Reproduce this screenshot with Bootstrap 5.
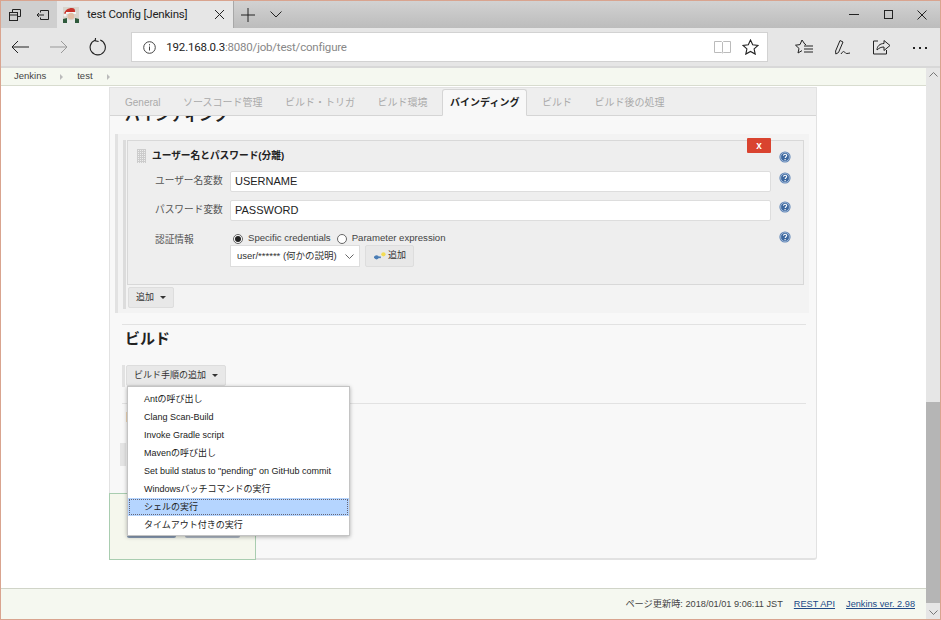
<!DOCTYPE html>
<html lang="ja">
<head>
    <meta charset="UTF-8">
    <title>test Config [Jenkins]</title>
    <link href="https://cdn.jsdelivr.net/npm/bootstrap@5.3.0/dist/css/bootstrap.min.css" rel="stylesheet">
    <style>
        html, body { height: 100%; overflow: hidden; }
        body { font-family: "Liberation Sans", "Noto Sans CJK JP", sans-serif; font-size: 11px; color: #333; background: #fff; }
        svg { display: block; flex: none; }

        /* browser frame */
        .win { height: 620px; display: flex; flex-direction: column; border: 1px solid #d9a48f; }
        .tabstrip { height: 27px; display: flex; align-items: center; background: linear-gradient(#d2d2d2, #bcbcbc); }
        .strip-btn { width: 28px; height: 27px; display: flex; align-items: center; justify-content: center; background: #cfcfcf; }
        .page-tab { width: 177px; height: 27px; display: flex; align-items: center; background: #e6e6e6; border-right: 1px solid #a8a8a8; padding-left: 6px; font-family: Roboto, sans-serif; font-size: 11.5px; letter-spacing: -.2px; color: #222; }
        .page-tab span { margin-left: 8px; flex-grow: 1; }
        .strip-ctl { display: flex; margin-left: auto; margin-right: 1px; }
        .strip-ctl div { width: 34px; height: 27px; display: flex; align-items: center; justify-content: center; }
        .toolbar { height: 38px; display: flex; align-items: center; background: #e6e6e6; border-bottom: 2px solid #d8d8d8; box-sizing: content-box; }
        .tool-btn { width: 39px; height: 38px; display: flex; align-items: center; justify-content: center; }
        .addr { width: 640px; height: 30px; margin-left: 14px; margin-right: 8px; display: flex; align-items: center; background: #fff; border: 1px solid #d2d2d2; padding: 0 8px 0 11px; font-family: Roboto, sans-serif; font-size: 11.5px; letter-spacing: -.2px; color: #888; }
        .addr b { font-weight: 400; color: #222; }
        .addr-text { margin-left: 10px; padding-top: 2px; flex-grow: 1; }
        .addr-star { margin-left: 11px; }
        .tool-first { margin-left: 9px; }

        .pagearea { flex-grow: 1; min-height: 0; display: flex; }
        .pagecol { width: 925px; display: flex; flex-direction: column; }
        .vscroll { width: 14px; background: #e6e6e6; display: flex; flex-direction: column; align-items: center; justify-content: space-between; position: relative; }
        .vscroll-thumb { position: absolute; left: 0; right: 0; top: 334px; height: 201px; background: #b5b5b5; }
        .vscroll svg { margin: 4px 0; position: relative; }

        /* jenkins */
        .crumbs { height: 18px; flex: none; background: #f5f8f0; border-bottom: 1px solid #d8dccf; display: flex; align-items: center; padding-left: 13px; font-size: 9.5px; color: #444; }
        .crumb-sep { width: 0; height: 0; margin: 0 14px; border-left: 3px solid #bbb; border-top: 3px solid transparent; border-bottom: 3px solid transparent; }
        .jmain { flex-grow: 1; min-height: 0; padding: 1px 0 0 108px; }
        .panel-box { width: 708px; height: 473px; position: relative; display: flex; flex-direction: column; background: #f8f8f8; border: 1px solid #e2e2e2; border-bottom-width: 2px; border-radius: 0 0 3px 3px; }

        .jtabs { height: 28px; flex: none; background: #eee; border-bottom: 1px solid #d5d5d5; padding: 1px 0 0 7px; flex-wrap: nowrap; font-size: 10px; white-space: nowrap; }
        .jtabs .nav-link { height: 27px; padding: 0 7px; margin-right: 6.5px; display: flex; align-items: center; color: #aaa; background: none; border: 1px solid transparent; border-radius: 3px 3px 0 0; }
        .jtabs .nav-link.active { color: #222; font-weight: 700; background: #f8f8f8; border-color: #d5d5d5 #d5d5d5 #f8f8f8; }
        .clip-head { height: 18px; overflow: hidden; padding-left: 15px; }
        .clip-head h2 { margin: -11px 0 0; font-size: 15px; line-height: 20px; font-weight: 700; color: #222; }

        .outer-block { width: 694px; height: 179px; margin-left: 5px; padding: 6px 5px 0 5px; background: #f3f3f3; border-left: 3px solid #e2e2e2; }
        .inner-wrap { height: 169px; border-left: 3px solid #dcdcdc; padding-left: 1px; }
        .inner-box { height: 145px; position: relative; background: #eee; border: 1px solid #d8d8d8; padding: 0 0 0 8px; }
        .dup-head { height: 30px; display: flex; align-items: center; padding-left: 1px; font-size: 9.7px; font-weight: 700; color: #222; }
        .dup-help { margin-left: auto; margin-right: 12px; margin-top: 2px; }
        .grip { width: 9px; height: 14px; margin-right: 6px; background-image: repeating-linear-gradient(#ccc 0 1px, transparent 1px 2px), repeating-linear-gradient(90deg, #ccc 0 1px, transparent 1px 2px); }
        .del-btn { position: absolute; right: 32px; top: -3px; width: 24px; height: 15px; padding: 0; border: 0; border-radius: 1px; background: #d9432f; color: #fff; font-size: 10px; font-weight: 700; line-height: 15px; }
        .frow { display: flex; align-items: flex-start; }
        .frow label { width: 94px; height: 21px; padding-left: 19px; display: flex; align-items: center; font-size: 9.7px; color: #555; flex: none; white-space: nowrap; }
        .frow label.cred-label { height: auto; padding-top: 2px; }
        .jinput.form-control { width: 541px; height: 21px; min-height: 0; padding: 0 4px 1px; font-size: 11px; color: #222; border: 1px solid #ddd; border-radius: 2px; background: #fff; }
        .help-ic { margin-left: 8px; margin-top: 1px; }
        .cred-col { width: 541px; display: flex; flex-direction: column; }
        .cred-row { margin-top: 10px; }
        .cred-row .help-ic { margin-top: 0; }
        .cred-radios { display: flex; align-items: center; height: 14px; font-size: 9.6px; color: #444; white-space: nowrap; }
        .jradio { width: 10px; height: 10px; margin: 2px 5px 0 3px; border: 1px solid #666; border-radius: 50%; background: #fff; display: flex; align-items: center; justify-content: center; }
        .jradio i { width: 6px; height: 6px; border-radius: 50%; background: #222; }
        .jradio.second { margin-left: 6px; }
        .jselect.form-select { width: 130px; height: 22px; min-height: 0; padding: 0 0 0 6px; font-size: 9.5px; color: #333; border: 1px solid #ddd; border-radius: 0; background-image: url("data:image/svg+xml,%3csvg xmlns='http://www.w3.org/2000/svg' viewBox='0 0 9 5'%3e%3cpath fill='none' stroke='%23666' d='M.5 .5l4 4 4-4'/%3e%3c/svg%3e"); background-size: 9px 5px; background-position: right 5px center; }
        .jbtn.btn { height: 21px; padding: 0 7px; display: inline-flex; align-items: center; font-size: 9px; color: #333; background: #e8e8e8; border: 1px solid #ddd; border-radius: 2px; white-space: nowrap; }
        .jbtn .caret { margin-left: 6px; width: 0; height: 0; border-left: 3px solid transparent; border-right: 3px solid transparent; border-top: 3px solid #333; }
        .addkey.btn { width: 49px; height: 22px; margin-left: 5px; padding: 0 0 0 8px; }
        .key-ic { margin-right: 2px; }
        .add-row { padding: 2px 0 0 1px; }

        .jrule { margin: 0; border: 0; border-top: 1px solid #e2e2e2; opacity: 1; }
        .jrule1 { margin: 11px 10px 0 12px; }
        .jrule2 { margin: 16px 10px 0 12px; }
        .sec-title { margin: 4px 0 0 15px; font-size: 15px; line-height: 20px; font-weight: 700; color: #222; }
        .step-row { margin: 16px 0 0 12px; padding-left: 1px; border-left: 3px solid #e2e2e2; height: 22px; position: relative; width: fit-content; }
        .step-menu.dropdown-menu { top: 21px; left: 2px; width: 223px; margin: 0; padding: 3px 0 1px; min-width: 0; font-size: 9px; border: 1px solid #c4c4c4; border-radius: 0; box-shadow: 0 1px 4px rgba(0,0,0,.3); }
        .step-menu .dropdown-item { height: 18px; padding: 0 0 0 16px; line-height: 18px; color: #222; white-space: nowrap; }
        .step-menu .dropdown-item.active { background: #b5d5ff; color: #222; outline: 1px dotted #667; outline-offset: -2px; }
        .mark-or { width: 1px; height: 10px; margin: 8px 0 0 16px; background: #f0d8b8; }
        .gray-bar { width: 6px; height: 23px; margin: 21px 0 0 10px; background: #e4e4e4; }
        .savebar { margin-top: auto; margin-left: -1px; margin-bottom: -2px; width: 147px; height: 67px; display: flex; gap: 9px; padding: 23px 0 0 17px; background: #f5f7ed; border: 1px solid #a9cdb0; }
        .save-btn, .apply-btn { height: 21px; border-radius: 2px; }
        .save-btn { width: 49px; background: #8a9db5; }
        .apply-btn { width: 55px; background: #b0bac6; }

        .jfoot { height: 31px; flex: none; background: #f5f8f0; border-top: 1px solid #d0d4c8; display: flex; align-items: center; justify-content: flex-end; gap: 11px; padding: 1px 11px 0 0; font-size: 9.2px; color: #444; }
        .jfoot a { color: #204a87; }
    </style>
</head>
<body>
    <svg width="0" height="0" class="position-absolute">
        <symbol id="help" viewBox="0 0 12 12">
            <circle cx="6" cy="6" r="5.600" fill="#5d83b5"/>
            <circle cx="6" cy="6" r="4.400" fill="#3d689f" stroke="#b8cbe2" stroke-width=".7"/>
            <path d="M4.400 4.700c.2-1 .9-1.400 1.700-1.400 1 0 1.600.6 1.600 1.300 0 1.200-1.500 1.200-1.500 2.500" fill="none" stroke="#fff" stroke-width="1.100"/>
            <rect x="5.500" y="8" width="1.200" height="1.200" fill="#fff"/>
        </symbol>
    </svg>

    <div class="win">
        <div class="tabstrip">
            <div class="strip-btn">
                <svg width="14" height="14" viewBox="0 0 14 14" fill="none" stroke="#222"><path d="M4.500 4.500v-3h8v7h-3"/><rect x="1.500" y="4.500" width="8" height="8"/><path d="M1.500 7h8"/></svg>
            </div>
            <div class="strip-btn">
                <svg width="14" height="12" viewBox="0 0 14 12" fill="none" stroke="#222"><path d="M4.500 3.500v-2h8v9h-8v-2"/><path d="M8 6H1m2-2L1 6l2 2"/></svg>
            </div>
            <div class="page-tab">
                <svg width="16" height="16" viewBox="0 0 16 16">
                    <rect width="16" height="16" fill="#d8d4cc"/>
                    <path d="M1 7C2 3 5 1 9 1c2 0 3 1 3 3v2z" fill="#c8332b"/>
                    <rect x="3" y="5" width="10" height="2" fill="#f4f4f4"/>
                    <circle cx="2" cy="8" r="1.600" fill="#f4f4f4"/>
                    <circle cx="8" cy="9" r="3.200" fill="#e2bfa6"/>
                    <path d="M4 11c2 3 6 3 8 0v5H4z" fill="#e8e8e8"/>
                    <path d="M0 12l4-1v5H0zM12 11l4 1v4h-4z" fill="#2f5a3c"/>
                </svg>
                <span>test Config [Jenkins]</span>
                <svg class="me-2" width="11" height="11" viewBox="0 0 11 11" stroke="#222"><path d="M1 1l9 9M10 1l-9 9"/></svg>
            </div>
            <div class="strip-btn bg-transparent">
                <svg width="14" height="14" viewBox="0 0 14 14" stroke="#222"><path d="M7 0v14M0 7h14"/></svg>
            </div>
            <div class="strip-btn bg-transparent">
                <svg width="12" height="7" viewBox="0 0 12 7" fill="none" stroke="#222"><path d="M.5 .5L6 6l5.500-5.500"/></svg>
            </div>
            <div class="strip-ctl">
                <div><svg width="10" height="1" viewBox="0 0 10 1" stroke="#222"><path d="M0 .5h10"/></svg></div>
                <div><svg width="9" height="9" viewBox="0 0 9 9" fill="none" stroke="#222"><rect x=".5" y=".5" width="8" height="8"/></svg></div>
                <div><svg width="10" height="10" viewBox="0 0 10 10" stroke="#222"><path d="M.5 .5l9 9M9.500 .5l-9 9"/></svg></div>
            </div>
        </div>

        <div class="toolbar">
            <div class="tool-btn">
                <svg width="18" height="14" viewBox="0 0 18 14" fill="none" stroke="#222"><path d="M18 7H1M7 1L1 7l6 6"/></svg>
            </div>
            <div class="tool-btn">
                <svg width="18" height="14" viewBox="0 0 18 14" fill="none" stroke="#999"><path d="M0 7h17M11 1l6 6-6 6"/></svg>
            </div>
            <div class="tool-btn">
                <svg width="18" height="18" viewBox="0 0 18 18" fill="none" stroke="#222" stroke-width="1.100"><path d="M6 2.200a7.600 7.600 0 1 0 5.200-.1"/><path d="M6.600 -1l-.4 3.400 3.400 .6" transform="translate(0 .5)"/></svg>
            </div>
            <div class="addr">
                <svg width="13" height="13" viewBox="0 0 13 13" fill="none" stroke="#444"><circle cx="6.500" cy="6.500" r="5.800"/><path d="M6.500 5.500v4M6.500 3.200v1.200"/></svg>
                <div class="addr-text"><b>192.168.0.3</b>:8080/job/test/configure</div>
                <svg width="17" height="14" viewBox="0 0 17 14" fill="none" stroke="#bbb"><path d="M.5 1.500h7l1 1 1-1h7v11h-7l-1 .5-1-.5h-7zM8.500 2.500v10"/></svg>
                <svg class="addr-star" width="17" height="16" viewBox="0 0 17 16" fill="none" stroke="#222" stroke-width="1.100"><path d="M8.500 1l2.200 4.800 5.300.6-3.900 3.500 1.100 5.200-4.700-2.700-4.700 2.700 1.100-5.200L1 6.400l5.300-.6z"/></svg>
            </div>
            <div class="tool-btn tool-first">
                <svg width="18" height="16" viewBox="0 0 18 16" fill="none" stroke="#222"><path d="M11 5.500l-1-.1L7 1 5 5.600l-4.500.6L4 9.400 3 14l4-2.400"/><path d="M9 7h9M9 10h9M9 13h9"/></svg>
            </div>
            <div class="tool-btn">
                <svg width="16" height="17" viewBox="0 0 16 17" fill="none" stroke="#222"><path d="M5 1.500L8 3 3.500 13.500.8 15l-.2-3z"/><path d="M6 15c2-3 3-3 4-1.500s2 1 5 .5"/></svg>
            </div>
            <div class="tool-btn">
                <svg width="18" height="16" viewBox="0 0 18 16" fill="none" stroke="#222"><path d="M5 2H.5v13h13v-4"/><path d="M4 11c0-4 3-6.500 7-6.500V1.500l6 5-6 5V8c-3 0-5 1-7 3z"/></svg>
            </div>
            <div class="tool-btn">
                <svg width="15" height="3" viewBox="0 0 15 3" fill="#222"><rect x="0" y="1" width="2" height="2"/><rect x="6" y="1" width="2" height="2"/><rect x="12" y="1" width="2" height="2"/></svg>
            </div>
        </div>

        <div class="pagearea">
            <div class="pagecol">
                <div class="crumbs">Jenkins<span class="crumb-sep"></span>test<span class="crumb-sep"></span></div>

                <div class="jmain">
                    <div class="panel-box">
                        <ul class="nav nav-tabs jtabs">
                            <li class="nav-item"><a class="nav-link" href="#">General</a></li>
                            <li class="nav-item"><a class="nav-link" href="#">ソースコード管理</a></li>
                            <li class="nav-item"><a class="nav-link" href="#">ビルド・トリガ</a></li>
                            <li class="nav-item"><a class="nav-link" href="#">ビルド環境</a></li>
                            <li class="nav-item"><a class="nav-link active" href="#">バインディング</a></li>
                            <li class="nav-item"><a class="nav-link" href="#">ビルド</a></li>
                            <li class="nav-item"><a class="nav-link" href="#">ビルド後の処理</a></li>
                        </ul>

                        <div class="clip-head"><h2>バインディング</h2></div>

                        <div class="outer-block">
                            <div class="inner-wrap">
                                <div class="inner-box">
                                    <button class="del-btn" type="button">x</button>
                                    <div class="dup-head">
                                        <span class="grip"></span>ユーザー名とパスワード(分離)
                                        <svg class="dup-help" width="12" height="12"><use href="#help"/></svg>
                                    </div>
                                    <div class="frow">
                                        <label>ユーザー名変数</label>
                                        <input class="form-control jinput" value="USERNAME">
                                        <svg class="help-ic" width="12" height="12"><use href="#help"/></svg>
                                    </div>
                                    <div class="frow mt-2">
                                        <label>パスワード変数</label>
                                        <input class="form-control jinput" value="PASSWORD">
                                        <svg class="help-ic" width="12" height="12"><use href="#help"/></svg>
                                    </div>
                                    <div class="frow cred-row">
                                        <label class="cred-label">認証情報</label>
                                        <div class="cred-col">
                                            <div class="cred-radios">
                                                <span class="jradio"><i></i></span>Specific credentials
                                                <span class="jradio second"></span>Parameter expression
                                            </div>
                                            <div class="d-flex">
                                                <select class="form-select jselect"><option>user/****** (何かの説明)</option></select>
                                                <button class="btn jbtn addkey" type="button">
                                                    <svg class="key-ic" width="12" height="10" viewBox="0 0 14 10"><circle cx="11" cy="3" r="2.500" fill="#f2dc55"/><path d="M0 6.500h8" stroke="#4a7db5" stroke-width="2"/><circle cx="3" cy="6.500" r="2.500" fill="#4a7db5"/></svg>追加
                                                </button>
                                            </div>
                                        </div>
                                        <svg class="help-ic" width="12" height="12"><use href="#help"/></svg>
                                    </div>
                                </div>
                                <div class="add-row">
                                    <button class="btn jbtn" type="button">追加<span class="caret"></span></button>
                                </div>
                            </div>
                        </div>

                        <hr class="jrule jrule1">
                        <h2 class="sec-title">ビルド</h2>
                        <div class="step-row dropdown">
                            <button class="btn jbtn" type="button">ビルド手順の追加<span class="caret"></span></button>
                            <ul class="dropdown-menu show step-menu">
                                <li><a class="dropdown-item" href="#">Antの呼び出し</a></li>
                                <li><a class="dropdown-item" href="#">Clang Scan-Build</a></li>
                                <li><a class="dropdown-item" href="#">Invoke Gradle script</a></li>
                                <li><a class="dropdown-item" href="#">Mavenの呼び出し</a></li>
                                <li><a class="dropdown-item" href="#">Set build status to "pending" on GitHub commit</a></li>
                                <li><a class="dropdown-item" href="#">Windowsバッチコマンドの実行</a></li>
                                <li><a class="dropdown-item active" href="#">シェルの実行</a></li>
                                <li><a class="dropdown-item" href="#">タイムアウト付きの実行</a></li>
                            </ul>
                        </div>
                        <hr class="jrule jrule2">
                        <div class="mark-or"></div>
                        <div class="gray-bar"></div>
                        <div class="savebar">
                            <div class="save-btn"></div>
                            <div class="apply-btn"></div>
                        </div>
                    </div>
                </div>

                <div class="jfoot">
                    <span>ページ更新時: 2018/01/01 9:06:11 JST</span>
                    <a href="#">REST API</a>
                    <a href="#">Jenkins ver. 2.98</a>
                </div>
            </div>

            <div class="vscroll">
                <div class="vscroll-thumb"></div>
                <svg width="9" height="5" viewBox="0 0 9 5" fill="none" stroke="#777"><path d="M.5 4.500l4-4 4 4"/></svg>
                <svg width="9" height="5" viewBox="0 0 9 5" fill="none" stroke="#777"><path d="M.5 .5l4 4 4-4"/></svg>
            </div>
        </div>
    </div>
</body>
</html>
